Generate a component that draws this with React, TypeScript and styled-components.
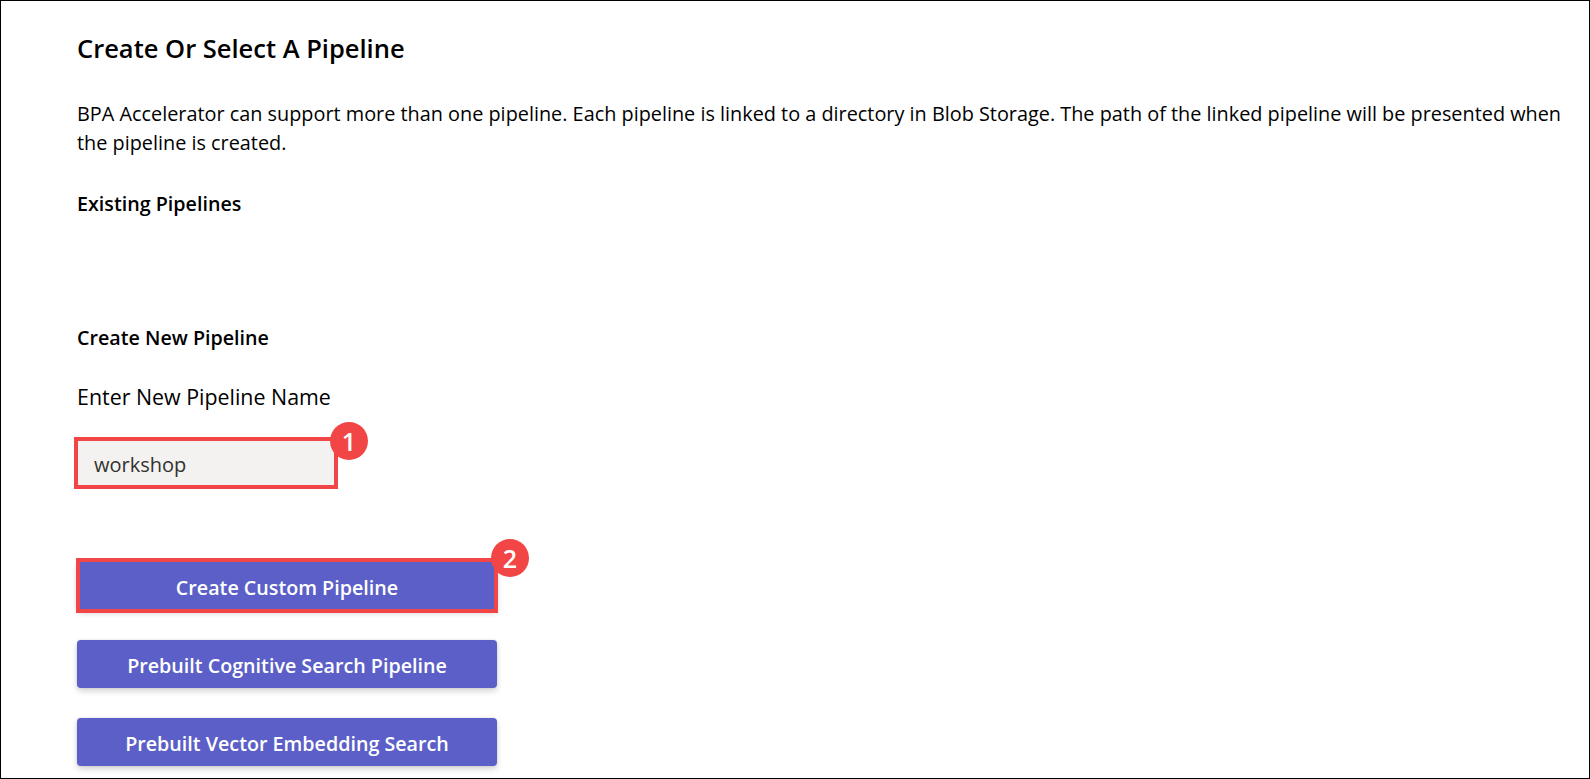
import React, { FC, useState } from "react";
import styled, { createGlobalStyle } from "styled-components";

const GlobalStyle = createGlobalStyle`
  html, body {
    margin: 0;
    padding: 0;
    background: #ffffff;
  }
  body {
    font-family: "Open Sans", "Noto Sans", sans-serif;
    color: #000;
  }
`;

const annotationRed = "#f24646";

const pipelineButtons = [
  { id: "custom", label: "Create Custom Pipeline", step: 2 },
  { id: "cognitive", label: "Prebuilt Cognitive Search Pipeline" },
  { id: "vector", label: "Prebuilt Vector Embedding Search" },
];

const App: FC = () => {
  const [name, setName] = useState("workshop");

  return (
    <>
      <GlobalStyle />
      <Frame>
        <Content>
          <Title>Create Or Select A Pipeline</Title>
          <Description>
            BPA Accelerator can support more than one pipeline. Each pipeline is linked to a directory in Blob
            Storage. The path of the linked pipeline will be presented when the pipeline is created.
          </Description>

          <SectionLabel>Existing Pipelines</SectionLabel>
          <ExistingList />

          <SectionLabel>Create New Pipeline</SectionLabel>
          <FieldLabel htmlFor="pipeline-name">Enter New Pipeline Name</FieldLabel>

          <InputWrap>
            <NameInput id="pipeline-name" value={name} onChange={(e) => setName(e.target.value)} />
            <Highlight $top={-4} $bottom={-4} $left={-4} $right={-4} />
            <StepBadge $x={15} $y={0}>1</StepBadge>
          </InputWrap>

          <ButtonStack>
            {pipelineButtons.map((b) => (
              <ButtonWrap key={b.id}>
                <PipelineButton type="button">{b.label}</PipelineButton>
                {b.step && (
                  <>
                    <Highlight $top={-4} $bottom={-3} $left={-1} $right={-1} />
                    <StepBadge $x={13} $y={-4}>
                      {b.step}
                    </StepBadge>
                  </>
                )}
              </ButtonWrap>
            ))}
          </ButtonStack>
        </Content>
      </Frame>
    </>
  );
};

const Frame = styled.div`
  width: 1590px;
  height: 779px;
  box-sizing: border-box;
  border: 1px solid #000;
  overflow: hidden;
  background: #fff;
`;

const Content = styled.div`
  padding: 30px 0 0 76px;
  display: flex;
  flex-direction: column;
  align-items: flex-start;
`;

const Title = styled.h2`
  margin: 0;
  font-size: 25.5px;
  font-weight: 600;
  line-height: 34px;
  color: #000;
`;

const Description = styled.p`
  margin: 34px 0 0;
  width: 1500px;
  font-size: 19.85px;
  line-height: 29px;
  color: #000;
`;

const SectionLabel = styled.h3`
  margin: 35px 0 0;
  font-size: 19.7px;
  font-weight: 600;
  line-height: 24px;
  color: #000;
`;

const ExistingList = styled.div`
  min-height: 86px;
  & + h3 {
    margin-top: 24px;
  }
`;

const FieldLabel = styled.label`
  margin-top: 35px;
  font-size: 21.4px;
  line-height: 24px;
  color: #000;
`;

const InputWrap = styled.div`
  position: relative;
  margin-top: 32px;
  margin-left: 1px;
`;

const NameInput = styled.input`
  display: block;
  box-sizing: border-box;
  width: 256px;
  height: 44px;
  padding: 2px 16px 0 16px;
  border: none;
  outline: none;
  background: #f3f2f1;
  font-family: "Open Sans", "Noto Sans", sans-serif;
  font-size: 20px;
  color: #323130;
`;

const Highlight = styled.div<{ $top: number; $bottom: number; $left: number; $right: number }>`
  position: absolute;
  top: ${(p) => p.$top}px;
  bottom: ${(p) => p.$bottom}px;
  left: ${(p) => p.$left}px;
  right: ${(p) => p.$right}px;
  border: 4px solid ${annotationRed};
  pointer-events: none;
`;

const StepBadge = styled.span<{ $x: number; $y: number }>`
  position: absolute;
  top: ${(p) => p.$y}px;
  right: ${(p) => -p.$x}px;
  width: 38px;
  height: 38px;
  transform: translate(50%, -50%);
  border-radius: 50%;
  background: ${annotationRed};
  color: #fff;
  display: flex;
  align-items: center;
  justify-content: center;
  font-family: "Open Sans", "Noto Sans", sans-serif;
  font-size: 25px;
  font-weight: 600;
  line-height: 1;
`;

const ButtonStack = styled.div`
  margin-top: 77px;
  display: flex;
  flex-direction: column;
  gap: 30px;
`;

const ButtonWrap = styled.div`
  position: relative;
  width: 420px;
`;

const PipelineButton = styled.button`
  display: block;
  width: 100%;
  height: 48px;
  padding: 2px 12px 0;
  border: none;
  border-radius: 4px;
  background: #5b5fc7;
  color: #fff;
  font-family: "Open Sans", "Noto Sans", sans-serif;
  font-size: 19.7px;
  font-weight: 600;
  box-shadow: 0 0 2px rgba(0, 0, 0, 0.12), 0 3px 6px rgba(0, 0, 0, 0.18);
  cursor: pointer;
`;

export default App;
